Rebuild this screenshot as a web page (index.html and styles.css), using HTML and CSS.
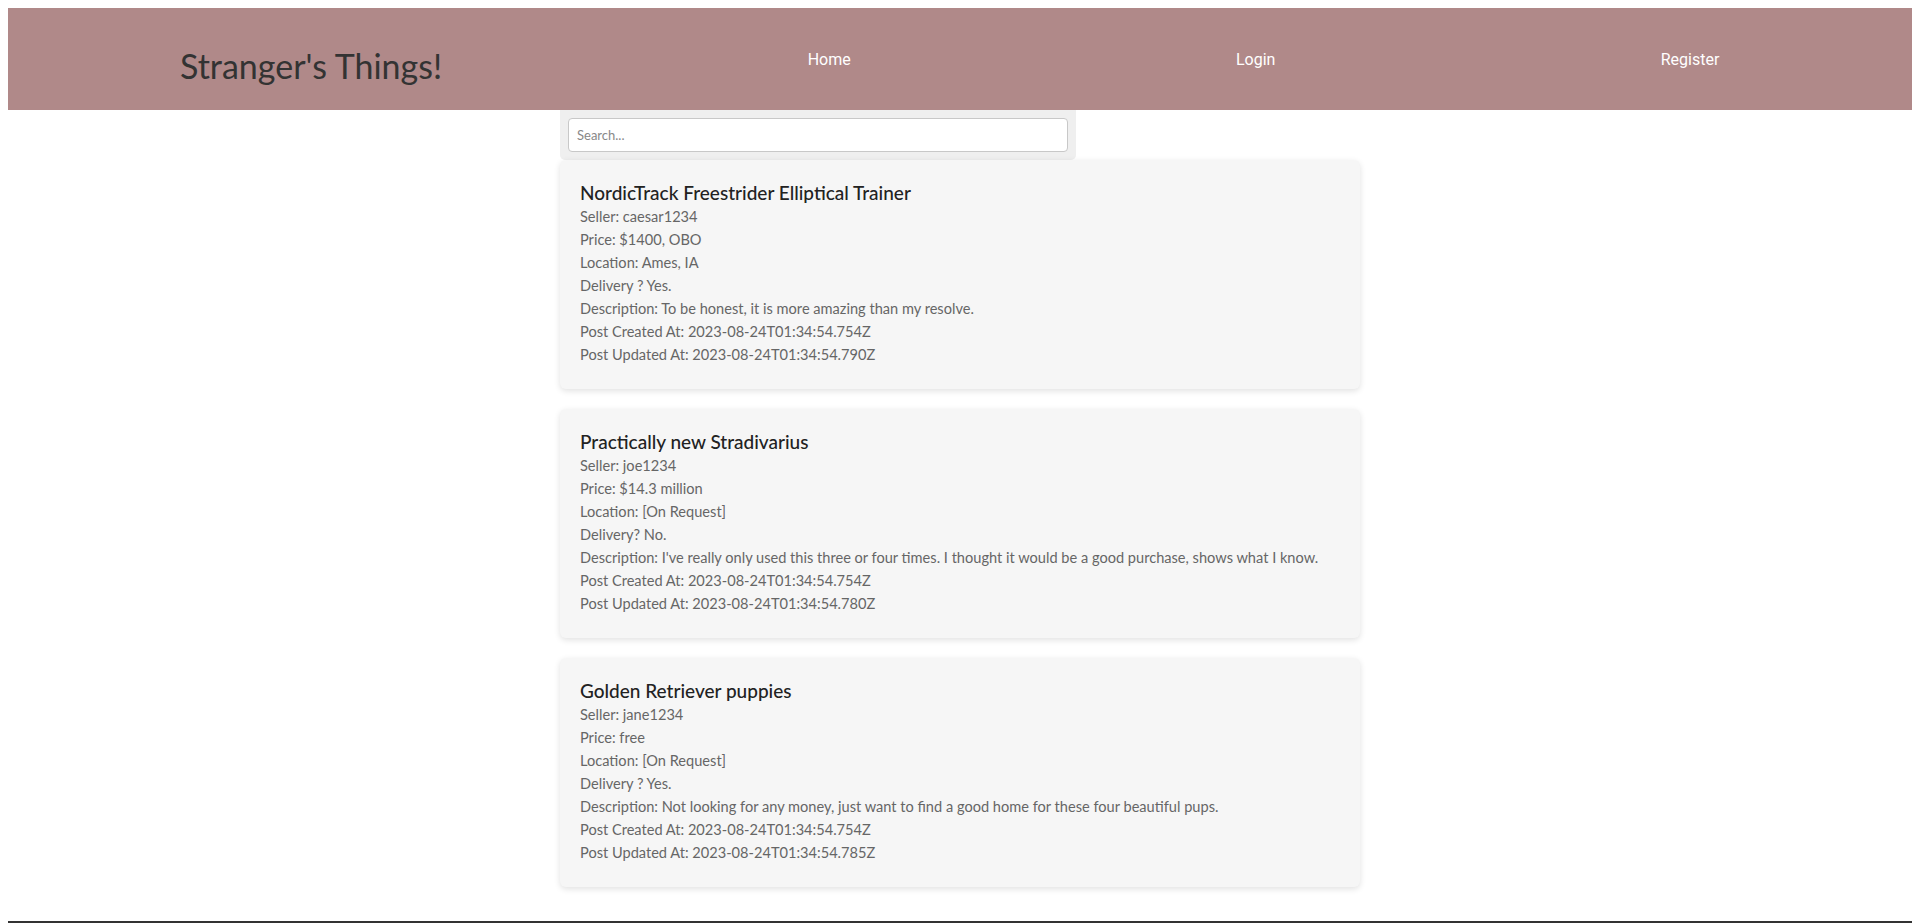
FILE: index.html
```html
<!DOCTYPE html>
<html lang="en">
<head>
<meta charset="utf-8">
<title>Stranger's Things!</title>
<link rel="stylesheet" href="styles.css">
</head>
<body>
<header class="site-header">
  <h1 class="brand">Stranger's Things!</h1>
  <nav class="nav">
    <a class="nav-link" href="#">Home</a>
    <a class="nav-link" href="#">Login</a>
    <a class="nav-link" href="#">Register</a>
  </nav>
</header>
<main class="posts">
  <div class="search-box">
    <input class="search-input" type="text" placeholder="Search...">
  </div>
  <article class="card">
    <h3 class="card-title">NordicTrack Freestrider Elliptical Trainer</h3>
    <p class="card-line">Seller: caesar1234</p>
    <p class="card-line">Price: $1400, OBO</p>
    <p class="card-line">Location: Ames, IA</p>
    <p class="card-line">Delivery ? Yes.</p>
    <p class="card-line">Description: To be honest, it is more amazing than my resolve.</p>
    <p class="card-line">Post Created At: 2023-08-24T01:34:54.754Z</p>
    <p class="card-line">Post Updated At: 2023-08-24T01:34:54.790Z</p>
  </article>
  <article class="card">
    <h3 class="card-title">Practically new Stradivarius</h3>
    <p class="card-line">Seller: joe1234</p>
    <p class="card-line">Price: $14.3 million</p>
    <p class="card-line">Location: [On Request]</p>
    <p class="card-line">Delivery? No.</p>
    <p class="card-line">Description: I've really only used this three or four times. I thought it would be a good purchase, shows what I know.</p>
    <p class="card-line">Post Created At: 2023-08-24T01:34:54.754Z</p>
    <p class="card-line">Post Updated At: 2023-08-24T01:34:54.780Z</p>
  </article>
  <article class="card">
    <h3 class="card-title">Golden Retriever puppies</h3>
    <p class="card-line">Seller: jane1234</p>
    <p class="card-line">Price: free</p>
    <p class="card-line">Location: [On Request]</p>
    <p class="card-line">Delivery ? Yes.</p>
    <p class="card-line">Description: Not looking for any money, just want to find a good home for these four beautiful pups.</p>
    <p class="card-line">Post Created At: 2023-08-24T01:34:54.754Z</p>
    <p class="card-line">Post Updated At: 2023-08-24T01:34:54.785Z</p>
  </article>
</main>
<footer class="site-footer"></footer>
</body>
</html>
```
FILE: styles.css
```css
html, body {
  overflow: hidden;
}
body {
  margin: 8px 8px 0;
  background: #fff;
  font-family: Lato, "Noto Sans", sans-serif;
  color: #333;
}
.site-header {
  display: flex;
  align-items: center;
  height: 102px;
  background: #b08989;
}
.brand {
  flex: 0 0 607px;
  box-sizing: border-box;
  padding-left: 172px;
  margin: 14px 0 0;
  font-size: 34px;
  font-weight: 400;
  color: #333;
  line-height: 40px;
}
.nav {
  flex: 1;
  display: flex;
  justify-content: space-around;
  margin-top: 0;
}
.nav-link {
  font-family: Roboto, "Liberation Sans", sans-serif;
  font-size: 16px;
  color: #fff;
  text-decoration: none;
}
.posts {
  width: 800px;
  margin: 0 auto;
}
.search-box {
  width: 516px;
  box-sizing: border-box;
  padding: 8px;
  background: #efefef;
  border-radius: 0 0 5px 5px;
}
.search-input {
  display: block;
  width: 100%;
  box-sizing: border-box;
  height: 34px;
  padding: 0 8px;
  border: 1px solid #c8c8c8;
  border-radius: 4px;
  background: #fff;
  font-family: Lato, sans-serif;
  font-size: 13px;
  color: #333;
  outline: none;
}
.search-input::placeholder {
  color: #888;
}
.card {
  box-sizing: border-box;
  height: 229px;
  padding: 20px 20px 22px;
  margin-bottom: 20px;
  background: #f6f6f6;
  border-radius: 6px;
  box-shadow: 0 2px 6px rgba(0, 0, 0, 0.12);
}
.card-title {
  margin: 0;
  font-size: 19px;
  font-weight: 500;
  line-height: 25px;
  color: #222;
}
.card-line {
  margin: 0;
  font-size: 14.6px;
  line-height: 23px;
  color: #666;
}
.site-footer {
  margin: 34px -8px 0;
  border-top: 2px solid #333;
}
```
